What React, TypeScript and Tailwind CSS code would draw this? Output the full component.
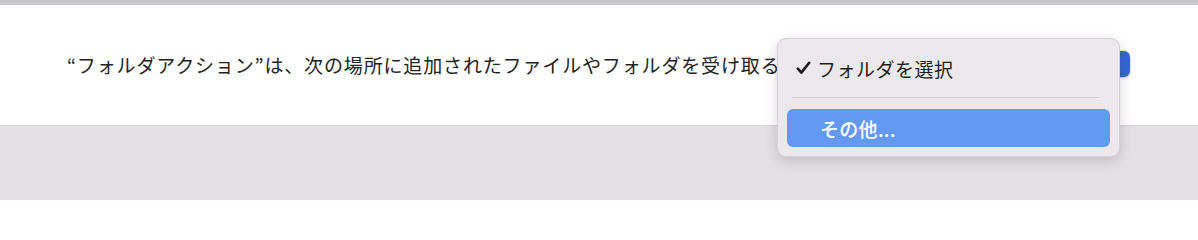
import React from "react";

export default function App() {
  return (
    <div className="relative w-[1198px] h-[200px] overflow-hidden bg-[#e4e0e5] [font-family:'Noto_Sans_CJK_JP','Noto_Sans',sans-serif]">
      <div className="h-[5px] bg-[#c9c7cb]" />
      <div className="h-[121px] bg-white border-b border-[#d6d4d8] flex items-center pl-[67px] pr-[68px] pb-[2px]">
        <span className="text-[19px] leading-none text-[#222] tracking-[0.85px] whitespace-nowrap">
          “フォルダアクション”は、次の場所に追加されたファイルやフォルダを受け取る
        </span>
        <div className="ml-auto h-[26px] w-[300px] rounded-[6px] bg-white shadow-[0_0_0_1px_rgba(0,0,0,0.08),0_1px_3px_rgba(0,0,0,0.15)] flex justify-end">
          <div className="w-[20px] h-full rounded-[6px] bg-[#3468d6]" />
        </div>
      </div>

      <div className="absolute left-[777px] top-[38px] w-[343px] h-[119px] rounded-[9px] bg-[#ebe9eb] border border-[#d4d2d5] shadow-[0_4px_14px_rgba(0,0,0,0.16)] flex flex-col pt-[4px]">
        <div className="h-[50px] flex items-center pl-[18px]">
          <svg width="15" height="14" viewBox="0 0 15 14" className="mr-[6px]">
            <path d="M1.8 7.6 L5.4 11.6 L13.2 1.8" fill="none" stroke="#1e1e1e" strokeWidth="2.6" strokeLinecap="round" strokeLinejoin="round" />
          </svg>
          <span className="text-[19px] leading-none text-[#1e1e1e] tracking-[0.5px]">フォルダを選択</span>
        </div>
        <div className="mt-[4px] mx-[14px] mr-[20px] h-px bg-[#d2d0d3]" />
        <div className="mt-[11px] mx-[9px] h-[38px] rounded-[6px] bg-[#6399f1] flex items-center pl-[33px]">
          <span className="text-[19px] leading-none text-white font-medium tracking-[0.3px]">その他...</span>
        </div>
      </div>
    </div>
  );
}
